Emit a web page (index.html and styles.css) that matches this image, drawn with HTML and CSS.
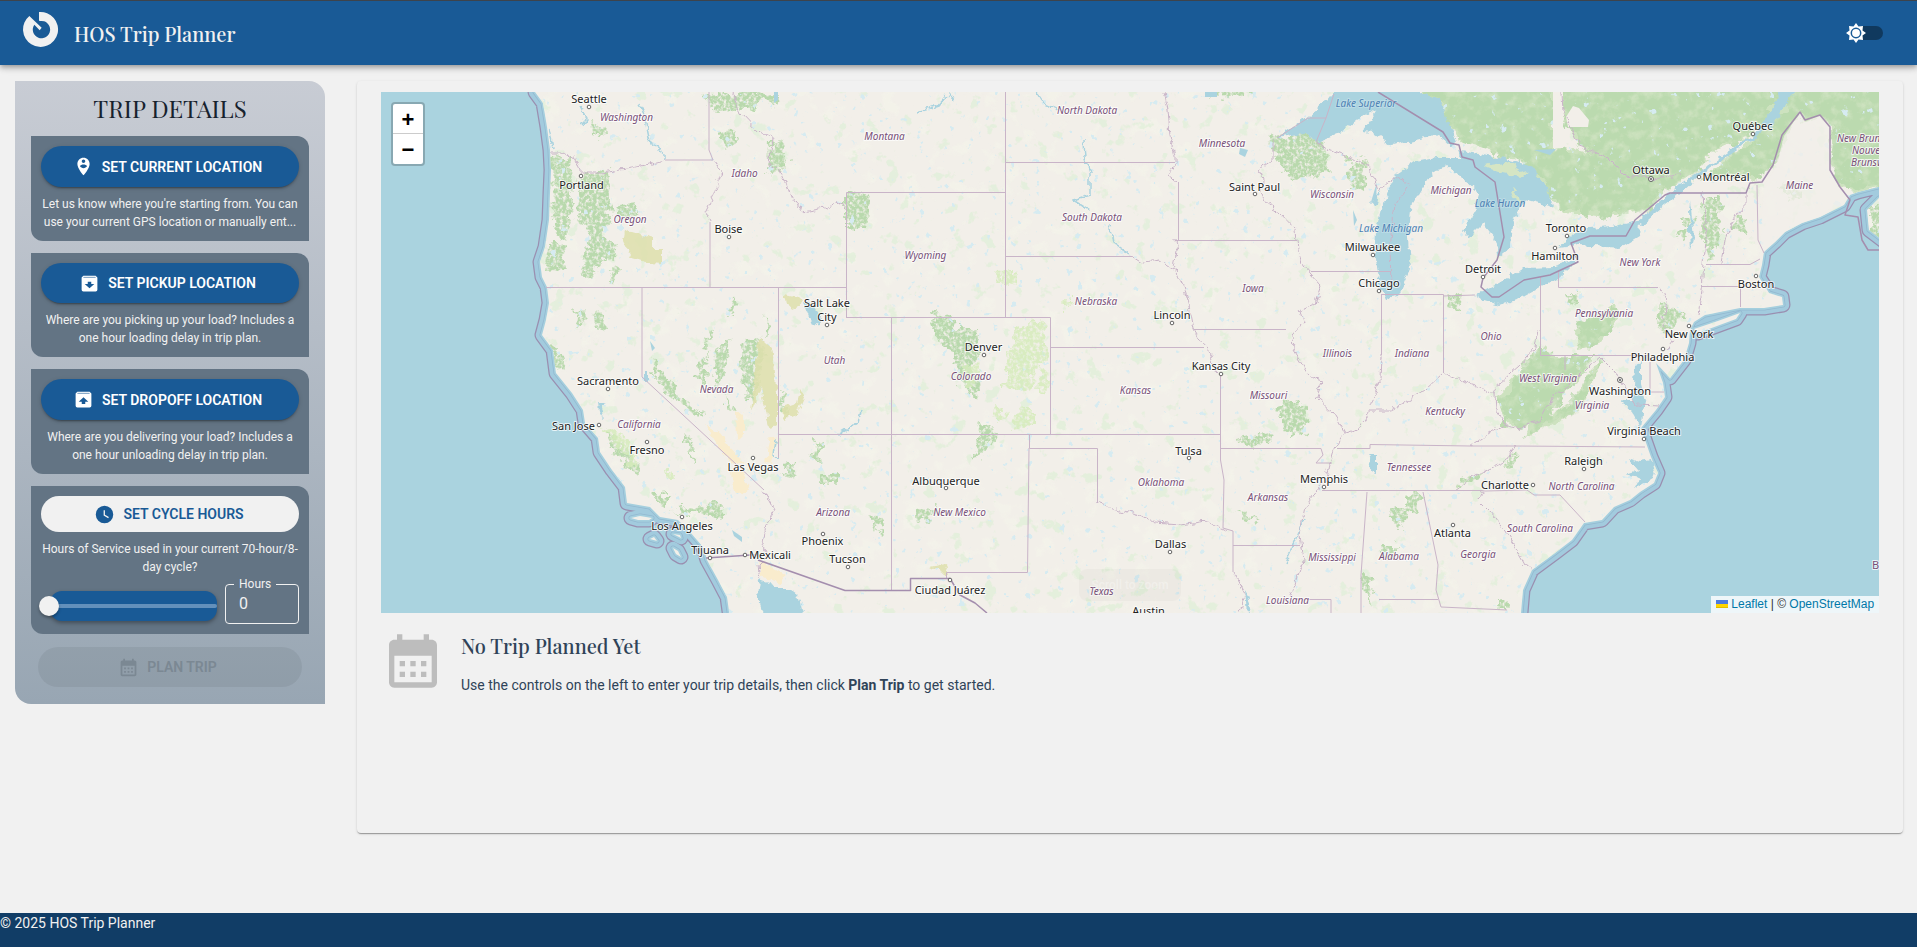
FILE: index.html
```html
<!DOCTYPE html>
<html lang="en">
<head>
<meta charset="utf-8">
<title>HOS Trip Planner</title>
<link rel="stylesheet" href="styles.css">
</head>
<body>
<div class="app">
  <header class="topbar">
    <svg class="logo" viewBox="66 33 111 111" aria-hidden="true"><path d="M117 36A52.500 52.500 0 1 1 88 48L125 83L119 91L103 74A26 26 0 1 0 121 63L117 62Z"/></svg>
    <h1 class="brand">HOS Trip Planner</h1>
    <div class="mode">
      <span class="mode-track"></span>
      <svg class="mode-sun" viewBox="-10 -10 20 20" aria-hidden="true">
        <path d="M0-10L2.500-6.500L7-7L6.500-2.500L10 0L6.500 2.500L7 7L2.500 6.500L0 10L-2.500 6.500L-7 7L-6.500 2.500L-10 0L-6.500-2.500L-7-7L-2.500-6.500Z" fill="#fff"/>
        <circle r="4.700" fill="none" stroke="#195a96" stroke-width="1.500"/>
      </svg>
    </div>
  </header>

  <main class="content">
    <aside class="sidebar">
      <h2 class="sidebar-title">TRIP DETAILS</h2>
      <section class="card">
        <button class="btn"><svg viewBox="0 0 24 24"><path d="M12 2C8.140 2 5 5.140 5 9c0 5.250 7 13 7 13s7-7.750 7-13c0-3.860-3.140-7-7-7zm0 2c1.100 0 2 .9 2 2 0 1.110-.9 2-2 2s-2-.89-2-2c0-1.100.9-2 2-2zm0 10c-1.670 0-3.140-.85-4-2.150.02-1.320 2.670-2.050 4-2.050s3.980.73 4 2.050c-.86 1.300-2.330 2.150-4 2.150z"/></svg><span>SET CURRENT LOCATION</span></button>
        <p class="desc">Let us know where you're starting from. You can<br>use your current GPS location or manually ent...</p>
      </section>
      <section class="card card-b">
        <button class="btn"><svg viewBox="0 0 24 24"><path d="M5 3h14l2 2v14a2 2 0 0 1-2 2H5a2 2 0 0 1-2-2V5zM12 17.500l5.500-5H14V10h-4v2.500H6.500z" fill-rule="evenodd"/><path d="M5 4.400h14v1H5z" fill="#195a96" opacity=".7"/></svg><span>SET PICKUP LOCATION</span></button>
        <p class="desc">Where are you picking up your load? Includes a<br>one hour loading delay in trip plan.</p>
      </section>
      <section class="card">
        <button class="btn"><svg viewBox="0 0 24 24"><path d="M5 3h14l2 2v14a2 2 0 0 1-2 2H5a2 2 0 0 1-2-2V5zM12 9.500l-5.500 5H10V17h4v-2.500h3.500z" fill-rule="evenodd"/><path d="M5 4.400h14v1H5z" fill="#195a96" opacity=".7"/></svg><span>SET DROPOFF LOCATION</span></button>
        <p class="desc">Where are you delivering your load? Includes a<br>one hour unloading delay in trip plan.</p>
      </section>
      <section class="card card-hours">
        <button class="btn btn-light"><svg viewBox="0 0 24 24"><path d="M12 2a10 10 0 1 0 0 20 10 10 0 0 0 0-20zm4.200 14.200L11 13V7h1.500v5.200l4.500 2.700z"/></svg><span>SET CYCLE HOURS</span></button>
        <p class="desc">Hours of Service used in your current 70-hour/8-<br>day cycle?</p>
        <div class="hours-row">
          <div class="slider"><span class="rail"></span><span class="thumb"></span></div>
          <fieldset class="hours"><legend>Hours</legend><span>0</span></fieldset>
        </div>
      </section>
      <button class="btn btn-plan"><svg viewBox="0 0 24 24"><path d="M19 4h-1V2h-2v2H8V2H6v2H5c-1.110 0-1.990.9-1.990 2L3 20c0 1.100.89 2 2 2h14c1.100 0 2-.9 2-2V6c0-1.100-.9-2-2-2zm0 16H5V10h14v10zM9 14H7v-2h2v2zm4 0h-2v-2h2v2zm4 0h-2v-2h2v2zm-8 4H7v-2h2v2zm4 0h-2v-2h2v2zm4 0h-2v-2h2v2z"/></svg><span>PLAN TRIP</span></button>
    </aside>

    <section class="panel">
      <div class="map">
        <svg class="map-art" viewBox="381 92 1498 521">
          <defs>
            <path id="land" d="M535 80V92L543 103L547 127L550 150L551 170L550 193L549 220L545 247L540 262L542 277L547 287L549 303L546 320L542 335L553 350L556 373L572 393L583 410L585 423L598 438L600 452L612 470L625 487L627 503L650 507L660 517L678 520L690 532L703 547L707 560L718 580L727 597L733 640H1520L1521 613L1523 590L1532 570L1555 553L1572 540L1584 523L1602 520L1614 507L1630 500L1640 492L1654 483L1658 473L1651 457L1644 437L1641 428L1656 410L1665 397L1663 383L1656 363L1670 378L1684 360L1689 343L1690 330L1694 322L1705 315L1740 308L1764 308L1783 305L1782 297L1769 293L1766 288L1759 277L1762 265L1764 252L1775 242L1785 232L1802 223L1820 217L1834 210L1844 205L1850 195L1858 192L1890 184V80ZM1694 329L1715 322L1740 313L1736 319L1698 333ZM1890 194L1879 198L1867 210L1869 230L1890 246ZM631 518l9-2 12 2-3 2h-11zM650 539l4-2 3 4zM673 534l7 1 1 3zM673 548l5 3 3 6-5-3z"/>
            <path id="canada" d="M1410 80H1553V153L1572 148L1620 165L1650 175L1672 182L1650 208L1605 217L1565 212L1545 190L1520 160L1460 140L1440 110ZM1563 80H1790L1768 120L1740 140L1712 152L1695 172L1665 190L1620 175L1585 150L1563 120ZM1800 112L1780 150L1772 168L1752 182L1735 175L1700 182L1740 150L1775 120L1800 80H1890V184L1858 192L1838 185L1832 165V127L1820 115L1805 122Z"/>
            <path id="appalachia" d="M1496 397L1520 372L1545 345L1550 357L1590 357L1580 378L1560 395L1544 420L1520 428L1507 422ZM1575 330l38-25 8 8-22 32-22 4zM1590 372l12-12-22 50-40 20-15 8 6-14 40-20z"/>
            <filter id="rough" x="-5%" y="-5%" width="110%" height="110%">
              <feTurbulence type="fractalNoise" baseFrequency=".1" numOctaves="4" seed="4" result="n"/>
              <feDisplacementMap in="SourceGraphic" in2="n" scale="18" xChannelSelector="R" yChannelSelector="G" result="d"/>
              <feTurbulence type="fractalNoise" baseFrequency=".3" numOctaves="3" seed="9"/>
              <feColorMatrix values="0 0 0 0 0  0 0 0 0 0  0 0 0 0 0  0 0 0 3 -.7" result="m"/>
              <feComposite in="d" in2="m" operator="in"/>
            </filter>
            <filter id="wobble" x="-5%" y="-5%" width="110%" height="110%">
              <feTurbulence type="fractalNoise" baseFrequency=".12" numOctaves="3" seed="2"/>
              <feDisplacementMap in="SourceGraphic" scale="8" xChannelSelector="R" yChannelSelector="G"/>
            </filter>
            <filter id="canopy" x="-5%" y="-5%" width="110%" height="110%">
              <feTurbulence type="fractalNoise" baseFrequency=".06" numOctaves="4" seed="7" result="n"/>
              <feDisplacementMap in="SourceGraphic" in2="n" scale="26" xChannelSelector="R" yChannelSelector="G" result="d"/>
              <feTurbulence type="fractalNoise" baseFrequency=".1" numOctaves="5" seed="15"/>
              <feColorMatrix values="0 0 0 0 0  0 0 0 0 0  0 0 0 0 0  0 0 0 3 -.6" result="m"/>
              <feComposite in="d" in2="m" operator="in"/>
            </filter>
            <filter id="specks" x="0" y="0" width="100%" height="100%">
              <feTurbulence type="fractalNoise" baseFrequency=".06" numOctaves="4" seed="21"/>
              <feColorMatrix values="0 0 0 0 .74  0 0 0 0 .86  0 0 0 0 .68  0 14 0 0 -9.200"/>
            </filter>
            <filter id="ponds" x="0" y="0" width="100%" height="100%">
              <feTurbulence type="fractalNoise" baseFrequency=".12" numOctaves="3" seed="33"/>
              <feColorMatrix values="0 0 0 0 .67  0 0 0 0 .83  0 0 0 0 .88  16 0 0 0 -11.400"/>
            </filter>
            <filter id="meadow" x="0" y="0" width="100%" height="100%">
              <feTurbulence type="fractalNoise" baseFrequency=".05" numOctaves="5" seed="12"/>
              <feColorMatrix values="0 0 0 0 .93  0 0 0 0 .955  0 0 0 0 .84  0 0 6 0 -3.500"/>
            </filter>
            <clipPath id="landclip"><use href="#land"/></clipPath>
          </defs>

          <rect x="381" y="92" width="1498" height="521" fill="#aad3df"/>
          <g stroke-linejoin="round">
            <use href="#land" fill="#9a8fb0" stroke="#9a8fb0" stroke-width="15"/>
            <use href="#land" fill="#a2cbde" stroke="#a2cbde" stroke-width="12.500"/>
            <use href="#land" fill="none" stroke="#93b9d1" stroke-width="5"/>
            <use href="#land" fill="none" stroke="#a5cfde" stroke-width="3.400"/>
            <use href="#land" fill="#f2efe9"/>
          </g>

          <g clip-path="url(#landclip)">
            <rect x="500" y="92" width="1379" height="521" filter="url(#meadow)" opacity=".35"/>
            <rect x="500" y="92" width="1379" height="521" filter="url(#specks)" opacity=".7"/>
            <g filter="url(#rough)" fill="#b9d9ad">
              <path d="M551 155L572 158L573 200L568 235L562 240L552 225ZM580 178L608 170L611 215L605 240L618 240L616 258L600 262L594 280L582 275L590 240L577 215ZM548 245L562 245L563 270L545 271ZM615 207l20-4 4 12-12 4zM592 120l12 5 2 14-12-2zM705 92H782L774 110L765 98L745 112L738 111L715 112ZM770 140l14 2 4 20-15 15-4-8zM846 193l24 2-4 30-20 3zM722 132l12-4 4 10-6 8-10-2z"/>
              <path d="M548 345l10 5 8 22-8-4zM605 430l20 15 16 25-8 3-24-28zM590 315l12-2 6 14-10 2zM654 358l3 10 22 25 22 20-4 4-26-20-20-26zM698 365l10-12-2 30-4 10zM712 370l12-30 6-2-10 50-4 2zM740 345l18-10 6 20-10 50-12-20zM780 390l10 20-8 10zM655 495h12v10h-12zM670 512l40-8 18 8-10 7-28-5zM685 430l8 15 2 16-6-10zM815 440l8 5-2 18-8-2zM820 475h18v8h-18zM728 305l8-6-2 16-6 2zM575 308l10 10-6 4zM765 315l4 16-6 6zM705 345l4-14 5 0-6 22zM725 395l8 15-4 4zM610 270l12-3-10 20zM785 465l12-2-2 14-10-4z"/>
              <path d="M932 310l16 3 10 15 18 0 2 22-8 26 12 10-6 12-8-10-10-12-6-25-12-8zM985 420l10 14-5 10-14 18-2-14 6-26zM913 510l22-2-4 12-16 2zM868 512l14 8-4 12zM1270 138L1310 130L1325 152L1330 175L1290 178L1275 160ZM1348 158L1366 162L1362 190L1350 185ZM1275 405l22-4 12 15-6 18-14 2zM1235 440l30-6 8 6-28 8zM1235 510l25 10-5 4zM1360 575l12 0-3 30zM1390 505l15 0-4 24-10-8z"/>
              <path d="M1565 295l12 0-4 12zM1460 480l24-8-6 8-20 6zM1500 465l18-12-4 16zM1705 195l16 0-2 50-10 20-8-30zM1735 218l12 2-2 12-12 0zM1680 215l14 4-4 8-10-3zM1677 232l12 2-6 8zM1405 492l18 2-8 18-10-2zM1497 600h10v10h-10zM1380 545l16 0-4 12-10 0zM1660 305l22 10-15 16-10-4zM1444 300l18-8-2 20zM1850 150l14 20-4 15-10-3zM1870 205h15v35h-15zM1780 185l20-2 4 14-14 4zM1205 88h45v8l-40 2z"/>
            </g>
            <g filter="url(#wobble)" fill="#cde2bf"><use href="#canada"/><use href="#appalachia"/></g>
            <g filter="url(#canopy)" fill="#bbdaaf"><use href="#canada"/><use href="#appalachia"/></g>
            <rect x="500" y="92" width="1379" height="521" filter="url(#ponds)"/>
            <path d="M1553 85h10v63h-10zM1573 106l6 2 10 12-1 7h-20l-2-10z" fill="#f2efe9"/>
            <path d="M1800 113L1805 122L1820 115L1830 127V170L1838 185L1845 203L1760 252L1764 186L1776 168L1784 136Z" fill="#f2efe9" opacity=".75"/>
            <g fill="#d6ecbc" filter="url(#rough)" opacity=".85"><path d="M1020 325l20-5 8 35-8 12-22-2-8-15zM1004 350l22 8 10 12-4 22-28-4zM1024 405l8 0 0 20-22 6 6-18zM1040 365l8 8-2 18-8 0zM965 365l14-2 2 18-15 4zM1000 270h14v16h-16zM1062 300h14v6h-14zM995 405l14 8-10 10-8-4zM600 425l24 10 16 28-8 2zM662 470h12v9h-12z"/></g>
            <g fill="#dedfad" filter="url(#wobble)"><path d="M625 230l28 8v12h10v14l-14-1-18-5-8-16zM759 338l12 10 6 45 0 32-8 2-8-40-10 25 4-40zM782 408l15-5 4-14 4 6-8 18-12 6zM785 294l18 4-8 12-8-4zM930 567l16-4 3 12-4 0z" opacity=".85"/></g>
            <g fill="#f9eccd" filter="url(#wobble)"><path d="M705 425l14 8 20 25 8 3-16 2-10-13zM737 410l6 5 0 20-5 5zM770 435l6 5-6 24-5-2zM730 468l12 4 8 16-10 8-4 0zM758 560l27 15-4 8-20-6z"/></g>
          </g>

          <g fill="#aad3df" filter="url(#wobble)">
            <path d="M1277 138L1308 117L1327 100L1333 92V84H1419V92L1440 100L1447 120L1457 142L1450 145L1438 135L1408 142L1391 145L1373 133L1362 132L1376 112L1370 111L1342 132L1317 142L1303 133Z"/>
            <path d="M1461 158L1436 158L1415 162L1398 173L1388 190L1381 210L1376 230L1375 255L1380 285L1386 298L1398 296L1410 270L1408 237L1412 203L1422 187L1436 170L1450 167L1461 177L1478 193L1475 213L1464 230L1469 237L1483 223L1494 237L1499 257L1511 247L1513 223L1525 200L1553 208L1548 187L1534 167L1509 160L1457 150Z"/>
            <path d="M1475 295L1499 283L1523 268L1555 267L1578 260L1558 278L1523 297L1499 305L1482 300ZM1558 248L1579 230L1611 227L1640 220L1639 237L1621 248L1579 245ZM1636 222L1680 185L1701 170L1752 135L1771 112L1782 85L1797 85L1776 122L1753 139L1703 173L1684 190L1642 225ZM1370 205l10-15-2 14zM803 300l9 4 9 14-2 8-8-4zM644 372h4v10h-4zM598 403l10 0-7 3 3 14-5-8z"/>
            <path d="M1635 365l6-2 0 22 4 16-4 27-5-10-14-18 10 0 2-15zM1628 458l12 4 12-2 4 16-22 14 6-12-14-4 12-4zM1245 590l6 15-4 8zM1690 200l4 38-3 12-2-40zM1368 455l8 0 0 20-5-8z"/>
            <path d="M763 625V613L758 597L760 580L768 583L775 587H787L798 595L803 613V625Z"/>
          </g>
          <path d="M1484 166l26-4 18 12-8 3-22-5zM1512 187l5 6 4 14-6-10z" fill="#d5e5c4" filter="url(#wobble)"/>
          <path d="M1377 182l-6 20 5-3zM1534 150l22-1-6 6zM732 530l10 7 0 5-8-6zM1240 148l8 2-3 7-6-3zM650 341l5 7-3 3zM1205 92h12v5h-12zM1353 210l4 10-3 6zM774 92h4v8l-4 3z" fill="#aad3df"/>
          <g filter="url(#wobble)"><path d="M917 112l22-7 10-12 5 7M1037 92l7 12 14 6M1084 140l1 18 5 15 0 22-17 5 16 10M1110 223l3 20 17 12M665 160l0-7-15-10-4-20-6-20M775 440l-2 15 5 4M838 435l20-12 3-12M1305 518l-20 45M580 105l8 14-6 6M549 127l4 22" fill="none" stroke="#aad3df" stroke-width="1.500"/></g>

          <g class="borders" filter="url(#wobble)">
            <path d="M550 152H562L577 160L580 173L600 173L632 168L665 160M713 160L722 172L714 195L705 213L712 222M764 490L775 510L766 525L763 545L768 555L758 565L760 580M732 92L740 112L760 133L772 139L768 165L780 170L790 195L803 212L825 208L840 203L846 208M1164 92L1168 110L1170 135L1175 155V165L1169 175L1178 182M1132 256L1143 263L1160 261L1178 272M1175 240L1177 252L1174 265L1183 285L1190 310L1194 330L1200 340L1212 354L1208 362L1220 373M1273 138V160L1260 170L1263 180L1262 200L1280 213L1296 230L1298 250L1303 265L1321 285L1315 303L1300 310L1303 323L1292 335L1293 350L1310 377L1322 381L1316 397L1335 415L1345 433L1333 450L1325 480L1305 507L1299 535L1303 560L1295 585L1290 600M1317 142L1322 148L1350 158L1368 165L1375 180L1378 190L1395 178L1410 185L1395 205L1390 240L1391 290M1097 503L1112 508L1140 515L1155 523L1180 525L1207 521L1225 530M1233 572L1245 595L1240 613M1345 433L1360 428L1371 410L1390 410L1410 400L1425 390L1443 373L1460 380L1480 387L1494 395L1500 383L1520 365L1535 348L1538 330M1494 395L1495 408L1507 425L1520 428L1540 420L1555 395L1570 385L1590 365L1600 357L1615 372L1622 382L1635 405L1660 406M1658 287L1668 302L1662 325L1674 340L1667 350M1507 425L1490 432L1470 446M1515 446L1505 462L1475 475L1455 490M1482 491L1478 500L1490 512L1505 530L1515 547L1525 565L1532 570M1703 193L1706 237L1702 290L1698 315M1745 193V210L1735 215L1725 240L1722 263M1562 92L1563 112L1580 147L1605 155L1625 175L1650 178L1680 175M1381 355L1380 380L1371 405"/>
          </g>
          <path class="borders" d="M709 92V150L713 160H665M710 222V287M546 287.500H846M642 287V377L764 490M778.500 287V458M846.500 317V192.500H1005.500M1005.500 92V317M1005 162.500H1175M1178.500 182V240.500M1175 240.500H1297M1005 256.500H1132M1194 329.500H1286M1311 271.500H1391M846 317.500H1050.500V434M1050 347.500H1204M891.500 317V590M778 434.500H1220M1220.500 373V460L1224 480L1223 528L1233 531V572M1029.500 434V448.500H1097.500V503M1029 448L1027.500 572.500H946.500V578M1220 448.500H1321L1323 455L1316 463H1332M1233 545.500H1300M1322 490.500H1482L1485 491L1527 490L1534 495H1560L1585 522M1423 492L1438 565L1436 590L1441 607L1507 610M1367 492L1361 575V613M1295 599.500H1331V613M1337 448.500H1370V444.500L1470 446H1515L1645 447M1381.500 294V355M1381 294.500H1443.500V373M1443 296L1475 295M1540.500 277V355.500H1648M1558.500 270V287.500H1658M1565 355V370M1379 599.500H1438M1757 185L1758 240L1764 253M1706 264.500H1750L1760 259M1701 286.500H1755M1740.500 286V307M1277 138L1308 118H1326L1334 94M1326 118L1316 142M1650 362V392H1664"/>
          <path class="nation" d="M1378 92L1443 132L1450 143L1459 145L1462 157L1473 160L1475 167L1495 182L1504 237L1497 260L1483 278L1481 287L1492 297L1499 297L1524 280L1550 275L1578 262L1571 243L1590 236L1626 236L1635 220L1665 195L1670 193H1746L1750 183L1762 182L1773 165L1782 135L1800 112L1805 120L1820 115L1830 127V170L1840 187L1850 200L1845 215L1858 217L1862 240L1868 250H1879M706 558L758 554.500M758 560L845 590.500H910.500V578.500H950L960 595L975 603L987 613"/>

          <g class="dots">
            <circle cx="589" cy="107" r="1.800"/><circle cx="581" cy="176" r="1.800"/><circle cx="729" cy="237" r="1.800"/><circle cx="827" cy="325" r="1.800"/><circle cx="608" cy="389" r="1.800"/><circle cx="599" cy="425" r="1.800"/><circle cx="647" cy="442" r="1.800"/><circle cx="753" cy="458" r="1.800"/><circle cx="682" cy="517" r="1.800"/><circle cx="710" cy="558" r="1.800"/><circle cx="745" cy="555" r="1.800"/><circle cx="823" cy="534" r="1.800"/><circle cx="848" cy="567" r="1.800"/><circle cx="984" cy="355" r="1.800"/><circle cx="946" cy="488" r="1.800"/><circle cx="950" cy="580" r="1.800"/><circle cx="1170" cy="552" r="1.800"/><circle cx="1189" cy="458" r="1.800"/><circle cx="1221" cy="374" r="1.800"/><circle cx="1172" cy="323" r="1.800"/><circle cx="1255" cy="194" r="1.800"/><circle cx="1373" cy="255" r="1.800"/><circle cx="1379" cy="291" r="1.800"/><circle cx="1324" cy="487" r="1.800"/><circle cx="1483" cy="277" r="1.800"/><circle cx="1555" cy="248" r="1.800"/><circle cx="1567" cy="236" r="1.800"/><circle cx="1699" cy="177" r="1.800"/><circle cx="1753" cy="134" r="1.800"/><circle cx="1756" cy="276" r="1.800"/><circle cx="1689" cy="326" r="1.800"/><circle cx="1663" cy="349" r="1.800"/><circle cx="1644" cy="439" r="1.800"/><circle cx="1584" cy="469" r="1.800"/><circle cx="1533" cy="485" r="1.800"/><circle cx="1453" cy="525" r="1.800"/><circle cx="1651" cy="179" r="2.500"/><circle cx="1651" cy="179" r=".8"/><circle cx="1620" cy="380" r="2.500"/><circle cx="1620" cy="380" r=".8"/>
          </g>
          <g class="states">
            <text x="626.500" y="121">Washington</text><text x="630" y="223">Oregon</text><text x="744.500" y="177">Idaho</text><text x="884.500" y="140">Montana</text><text x="1087" y="114">North Dakota</text><text x="1092" y="221">South Dakota</text><text x="925.500" y="259">Wyoming</text><text x="1222" y="147">Minnesota</text><text x="1332" y="198">Wisconsin</text><text x="1096" y="305">Nebraska</text><text x="1253" y="292">Iowa</text><text x="834.500" y="364">Utah</text><text x="716.500" y="393">Nevada</text><text x="639" y="428">California</text><text x="971" y="380">Colorado</text><text x="1135.500" y="394">Kansas</text><text x="1268.500" y="399">Missouri</text><text x="1337.500" y="357">Illinois</text><text x="1412" y="357">Indiana</text><text x="1491" y="340">Ohio</text><text x="1445" y="415">Kentucky</text><text x="1409" y="471">Tennessee</text><text x="1161" y="486">Oklahoma</text><text x="1268" y="501">Arkansas</text><text x="959.500" y="516">New Mexico</text><text x="833" y="516">Arizona</text><text x="1332" y="561">Mississippi</text><text x="1399" y="560">Alabama</text><text x="1478" y="558">Georgia</text><text x="1540" y="532">South Carolina</text><text x="1581.500" y="490">North Carolina</text><text x="1592" y="409">Virginia</text><text x="1548" y="382">West Virginia</text><text x="1604" y="317">Pennsylvania</text><text x="1640" y="266">New York</text><text x="1799.500" y="189">Maine</text><text x="1451" y="194">Michigan</text><text x="1101.500" y="595">Texas</text><text x="1287.500" y="604">Louisiana</text><text class="start" x="1837" y="142">New Brunswick</text><text class="start" x="1852" y="154">Nouveau-</text><text class="start" x="1851" y="166">Brunswick</text>
          </g>
          <g class="lakes"><text x="1366" y="107">Lake Superior</text><text x="1500" y="207">Lake Huron</text><text x="1391" y="232">Lake Michigan</text></g>
          <g class="cities">
            <text x="589" y="103">Seattle</text><text x="581.500" y="189">Portland</text><text x="728.500" y="233">Boise</text><text x="827" y="307">Salt Lake</text><text x="827" y="321">City</text><text x="608" y="385">Sacramento</text><text x="573.500" y="430">San Jose</text><text x="647" y="454">Fresno</text><text x="753" y="471">Las Vegas</text><text x="682" y="530">Los Angeles</text><text x="710" y="554">Tijuana</text><text x="770" y="559">Mexicali</text><text x="822.500" y="545">Phoenix</text><text x="847.500" y="563">Tucson</text><text x="983.500" y="351">Denver</text><text x="946" y="485">Albuquerque</text><text x="950" y="594">Ciudad Juárez</text><text x="1170.500" y="548">Dallas</text><text x="1148.500" y="615">Austin</text><text x="1188.500" y="455">Tulsa</text><text x="1221" y="370">Kansas City</text><text x="1172" y="319">Lincoln</text><text x="1254.500" y="191">Saint Paul</text><text x="1372.500" y="251">Milwaukee</text><text x="1379" y="287">Chicago</text><text x="1324" y="483">Memphis</text><text x="1483" y="273">Detroit</text><text x="1555" y="260">Hamilton</text><text x="1566" y="232">Toronto</text><text x="1651" y="174">Ottawa</text><text x="1726" y="181">Montréal</text><text x="1752.500" y="130">Québec</text><text x="1756" y="288">Boston</text><text x="1689" y="338">New York</text><text x="1662.500" y="361">Philadelphia</text><text x="1620" y="395">Washington</text><text x="1644" y="435">Virginia Beach</text><text x="1583.500" y="465">Raleigh</text><text x="1505" y="489">Charlotte</text><text x="1452.500" y="537">Atlanta</text><text class="start island" x="1872" y="569">Bermuda</text>
          </g>
        </svg>
        <div class="zoom"><span>+</span><span>−</span></div>
        <div class="hint">Scroll to zoom</div>
        <div class="attribution"><svg viewBox="0 0 12 8"><path fill="#4C7BE1" d="M0 0h12v4H0z"/><path fill="#FFD500" d="M0 4h12v3H0z"/><path fill="#E0BC00" d="M0 7h12v1H0z"/></svg> <a>Leaflet</a> | © <a>OpenStreetMap</a></div>
      </div>
      <div class="empty">
        <svg class="empty-icon" viewBox="0 0 24 24"><path d="M19 4h-1V2h-2v2H8V2H6v2H5c-1.110 0-1.990.9-1.990 2L3 20c0 1.100.89 2 2 2h14c1.100 0 2-.9 2-2V6c0-1.100-.9-2-2-2zm0 16H5V10h14v10zM9 14H7v-2h2v2zm4 0h-2v-2h2v2zm4 0h-2v-2h2v2zm-8 4H7v-2h2v2zm4 0h-2v-2h2v2zm4 0h-2v-2h2v2z"/></svg>
        <div>
          <h3 class="empty-title">No Trip Planned Yet</h3>
          <p class="empty-text">Use the controls on the left to enter your trip details, then click <b>Plan Trip</b> to get started.</p>
        </div>
      </div>
    </section>
  </main>
  <footer class="footer">© 2025 HOS Trip Planner</footer>
</div>
</body>
</html>
```

FILE: styles.css
```css
* { box-sizing: border-box; }
body { margin: 0; background: #f1f1f1; font-family: Roboto, sans-serif; color: #2f4050; overflow: hidden; }
h1, h2, h3, p { margin: 0; font-weight: 400; }
.app { height: 947px; display: flex; flex-direction: column; }

.topbar { position: relative; height: 65px; flex: none; display: flex; align-items: center; padding: 0 34px 0 22px; background: #195a96; border-top: 1px solid #3d434b; color: #f1f1f1; box-shadow: 0 2px 4px -1px rgba(0,0,0,.2), 0 4px 5px rgba(0,0,0,.14), 0 1px 10px rgba(0,0,0,.12); }
.logo { width: 37px; height: 37px; fill: #f1f1f1; margin-bottom: 7px; }
.brand { margin: 2px 0 0 15px; font: 500 20px/28px "Playfair Display", "Liberation Serif", serif; white-space: nowrap; }
.mode { margin-left: auto; position: relative; width: 37px; height: 20px; display: flex; align-items: center; justify-content: flex-end; }
.mode-track { width: 27px; height: 14px; border-radius: 7px; background: #10395e; }
.mode-sun { position: absolute; left: 0; top: 0; width: 20px; height: 20px; }

.content { flex: 1; display: flex; align-items: flex-start; gap: 32px; padding: 16px 14px 0 15px; }
.sidebar { width: 310px; height: 623px; flex: none; padding: 12px 16px 0; border-radius: 0 16px 0 16px; background: linear-gradient(#c8ccd4, #98a6b3); display: flex; flex-direction: column; }
.sidebar-title { height: 43px; text-align: center; font: 400 24px/31px "Playfair Display", "Liberation Serif", serif; color: #17222e; white-space: nowrap; }
.card { height: 105px; margin-bottom: 12px; padding: 10px; border-radius: 0 12px 0 12px; background: #637484; }
.card-b { height: 104px; }
.card-hours { height: 148px; margin-bottom: 13px; }
.btn { display: flex; align-items: center; justify-content: center; gap: 8px; width: 100%; height: 41px; padding: 0 5px 0 0; border: 0; border-radius: 21px; background: #195a96; color: #fff; font: 600 14px/24px Roboto, sans-serif; white-space: nowrap; box-shadow: 0 3px 1px -2px rgba(0,0,0,.2), 0 2px 2px rgba(0,0,0,.14), 0 1px 5px rgba(0,0,0,.12); }
.btn svg { width: 21px; height: 21px; fill: currentColor; }
.card-b .btn { height: 40px; }
.btn-light { height: 36px; padding: 0 2px 0 0; background: #f1f1f1; color: #195a96; box-shadow: none; }
.btn-plan { width: 264px; height: 40px; flex: none; align-self: center; background: rgba(0,0,0,.06); color: #7b8893; box-shadow: none; }
.desc { margin: 8px -6px 0; text-align: center; font-size: 12px; line-height: 18px; color: #f1f1f1; white-space: nowrap; }
.hours-row { display: flex; justify-content: space-between; align-items: flex-end; height: 48px; padding-left: 9px; }
.slider { position: relative; width: 167px; height: 30px; margin-bottom: 3px; border-radius: 12px; background: #195a96; box-shadow: 0 2px 4px rgba(0,0,0,.35); display: flex; align-items: center; }
.rail { width: 100%; height: 4px; border-radius: 2px; background: #6390bb; }
.thumb { position: absolute; left: -11px; top: 5px; width: 20px; height: 20px; border-radius: 50%; background: #f1f1f1; box-shadow: 0 2px 3px rgba(0,0,0,.3); }
.hours { width: 74px; height: 46px; margin: 0; padding: 0 0 0 13px; border: 1px solid #f1f1f1; border-radius: 4px; color: #f1f1f1; font-size: 16px; line-height: 28px; min-width: 0; }
.hours legend { font-size: 12px; line-height: 12px; padding: 0 5px; margin-left: -5px; }

.panel { width: 1546px; height: 752px; padding: 11px 24px; border-radius: 4px; background: #f1f1f1; box-shadow: 0 2px 1px -1px rgba(0,0,0,.2), 0 1px 1px rgba(0,0,0,.14), 0 1px 3px rgba(0,0,0,.12); }
.map { position: relative; width: 1498px; height: 521px; overflow: hidden; }
.map-art { display: block; width: 1498px; height: 521px; }
.borders { fill: none; stroke: #c9b4c8; stroke-width: 1; }
.nation { fill: none; stroke: #a48eae; stroke-width: 1.500; stroke-linejoin: round; }
.dots circle { fill: #fff; stroke: #555; stroke-width: .9; }
.map-art text { font-family: "Noto Sans", sans-serif; text-anchor: middle; paint-order: stroke; stroke: rgba(255,255,255,.75); stroke-width: 2px; stroke-linejoin: round; }
.states text { font-size: 10px; font-style: italic; fill: #785078; }
.lakes text { font-size: 10px; font-style: italic; fill: #4d80b3; stroke-opacity: .3; }
.cities text { font-size: 11px; fill: #222; }
.map-art .start { text-anchor: start; }
.cities .island { fill: #785078; }
.zoom { position: absolute; left: 10px; top: 10px; width: 34px; height: 64px; border: 2px solid rgba(0,0,0,.2); border-radius: 4px; background: #fff; background-clip: padding-box; display: flex; flex-direction: column; font: 700 22px/31px "Liberation Sans", sans-serif; color: #000; text-align: center; }
.zoom span { height: 30px; }
.zoom span:first-child { border-bottom: 1px solid #ccc; }
.hint { position: absolute; left: 698px; top: 477px; width: 102px; height: 32px; border-radius: 8px; background: rgba(0,0,0,.025); color: rgba(255,255,255,.3); font: 500 12px/32px Roboto, sans-serif; text-align: center; }
.attribution { position: absolute; right: 0; bottom: 0; width: 168px; padding: 0 5px; background: rgba(255,255,255,.8); font: 12px/17px "Liberation Sans", sans-serif; color: #333; white-space: nowrap; }
.attribution svg { width: 12px; height: 8px; }
.attribution a { color: #0078a8; }

.empty { display: flex; gap: 16px; padding-top: 16px; }
.empty-icon { width: 64px; height: 64px; fill: #bdbdbd; }
.empty-title { font: 500 20px/33px "Playfair Display", "Liberation Serif", serif; color: #2f4358; white-space: nowrap; }
.empty-text { margin-top: 12px; font-size: 14px; line-height: 22px; color: #2f4358; }
.footer { height: 34px; flex: none; background: #113d66; color: #f1f1f1; font-size: 14px; line-height: 21px; }
```
